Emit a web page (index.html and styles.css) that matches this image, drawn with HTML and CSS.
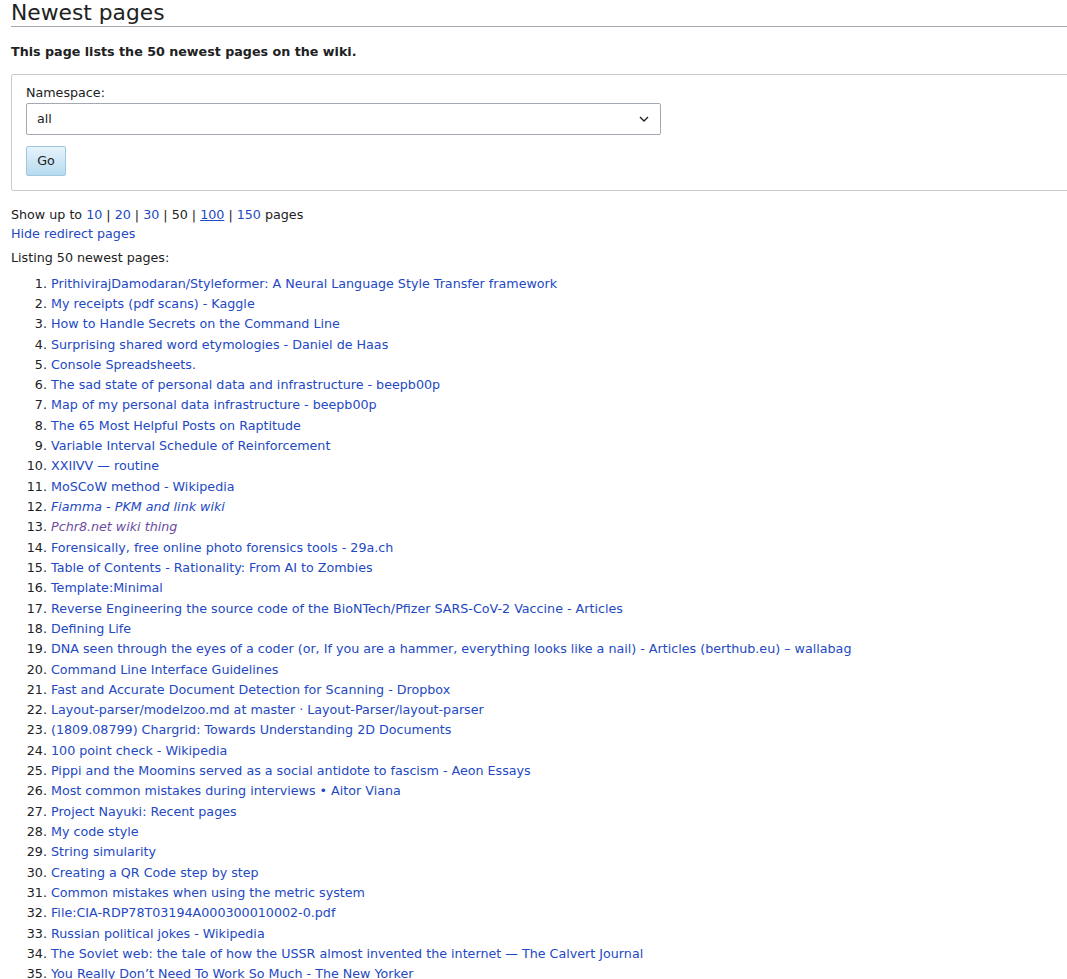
FILE: index.html
```html
<!DOCTYPE html>
<html>
  <head>
    <meta name="viewport" content="width=device-width, initial-scale=1" />
    <title>Newest pages</title>
    <link rel="stylesheet" href="styles.css">
  </head>
  <body>
    <div class="content">
      <h1 class="page-title">Newest pages</h1>

      <p class="intro"><b>This page lists the 50 newest pages on the wiki.</b></p>

      <form class="options" action="#">
        <label for="namespace">Namespace:</label>
        <div class="select-wrap">
          <select id="namespace" name="namespace">
            <option>all</option>
          </select>
          <svg class="chevron" width="10" height="6" viewBox="0 0 10 6">
            <path d="M1 1l4 4 4-4" fill="none" stroke="#202122" stroke-width="1.4" />
          </svg>
        </div>
        <button type="submit" class="go">Go</button>
      </form>

      <p class="limits">
        Show up to <a href="#">10</a> | <a href="#">20</a> | <a href="#">30</a> | 50 | <a href="#" class="hover">100</a> | <a href="#">150</a> pages<br />
        <a href="#">Hide redirect pages</a>
      </p>

      <p>Listing 50 newest pages:</p>

      <ol class="newpages">
        <li><a href="#">PrithivirajDamodaran/Styleformer: A Neural Language Style Transfer framework</a></li>
        <li><a href="#">My receipts (pdf scans) - Kaggle</a></li>
        <li><a href="#">How to Handle Secrets on the Command Line</a></li>
        <li><a href="#">Surprising shared word etymologies - Daniel de Haas</a></li>
        <li><a href="#">Console Spreadsheets.</a></li>
        <li><a href="#">The sad state of personal data and infrastructure - beepb00p</a></li>
        <li><a href="#">Map of my personal data infrastructure - beepb00p</a></li>
        <li><a href="#">The 65 Most Helpful Posts on Raptitude</a></li>
        <li><a href="#">Variable Interval Schedule of Reinforcement</a></li>
        <li><a href="#">XXIIVV — routine</a></li>
        <li><a href="#">MoSCoW method - Wikipedia</a></li>
        <li class="redirect"><a href="#">Fiamma - PKM and link wiki</a></li>
        <li class="redirect"><a href="#" class="visited">Pchr8.net wiki thing</a></li>
        <li><a href="#">Forensically, free online photo forensics tools - 29a.ch</a></li>
        <li><a href="#">Table of Contents - Rationality: From AI to Zombies</a></li>
        <li><a href="#">Template:Minimal</a></li>
        <li><a href="#">Reverse Engineering the source code of the BioNTech/Pfizer SARS-CoV-2 Vaccine - Articles</a></li>
        <li><a href="#">Defining Life</a></li>
        <li><a href="#">DNA seen through the eyes of a coder (or, If you are a hammer, everything looks like a nail) - Articles (berthub.eu) – wallabag</a></li>
        <li><a href="#">Command Line Interface Guidelines</a></li>
        <li><a href="#">Fast and Accurate Document Detection for Scanning - Dropbox</a></li>
        <li><a href="#">Layout-parser/modelzoo.md at master · Layout-Parser/layout-parser</a></li>
        <li><a href="#">(1809.08799) Chargrid: Towards Understanding 2D Documents</a></li>
        <li><a href="#">100 point check - Wikipedia</a></li>
        <li><a href="#">Pippi and the Moomins served as a social antidote to fascism - Aeon Essays</a></li>
        <li><a href="#">Most common mistakes during interviews • Aitor Viana</a></li>
        <li><a href="#">Project Nayuki: Recent pages</a></li>
        <li><a href="#">My code style</a></li>
        <li><a href="#">String simularity</a></li>
        <li><a href="#">Creating a QR Code step by step</a></li>
        <li><a href="#">Common mistakes when using the metric system</a></li>
        <li><a href="#">File:CIA-RDP78T03194A000300010002-0.pdf</a></li>
        <li><a href="#">Russian political jokes - Wikipedia</a></li>
        <li><a href="#">The Soviet web: the tale of how the USSR almost invented the internet — The Calvert Journal</a></li>
        <li><a href="#">You Really Don’t Need To Work So Much - The New Yorker</a></li>
      </ol>
    </div>
  </body>
</html>
```

FILE: styles.css
```css
/* Основа страницы */
html {
  overflow-x: hidden;
  scrollbar-width: none;
}

body {
  margin: 0;
  font-family: "DejaVu Sans", sans-serif;
  font-size: 12.7px;
  line-height: 1.5em;
  color: #202122;
  background: #fff;
}

.content {
  margin: 0 -30px 0 11px;
}

a {
  color: #2349c2;
  text-decoration: none;
}

a.hover {
  text-decoration: underline;
}

a.visited {
  color: #6b4ba1;
}

p {
  margin: 0.4em 0 0.5em 0;
}

/* Заголовок */
.page-title {
  margin: 0;
  font-size: 21.8px;
  font-weight: normal;
  line-height: 26px;
  border-bottom: 1px solid #a2a9b1;
}

.intro {
  margin: 15px 0 0;
}

/* Форма выбора пространства имён */
.options {
  margin: 13px 0 0;
  padding: 9px 14px 14px;
  border: 1px solid #c8ccd1;
  border-radius: 2px;
}

.options label {
  display: block;
  line-height: 17px;
  margin-bottom: 2px;
}

.select-wrap {
  position: relative;
  width: 635px;
}

.select-wrap select {
  appearance: none;
  -webkit-appearance: none;
  display: block;
  width: 100%;
  height: 32px;
  padding: 0 28px 2px 10px;
  font-family: inherit;
  font-size: 12.7px;
  color: #202122;
  background: #fff;
  border: 1px solid #a2a9b1;
  border-radius: 2px;
}

.chevron {
  position: absolute;
  right: 12px;
  top: 13px;
}

.go {
  display: block;
  margin-top: 11px;
  width: 40px;
  height: 30px;
  padding: 0 0 2px;
  font-family: inherit;
  font-size: 12.7px;
  color: #202122;
  background: linear-gradient(#e6f3fb, #b7dbef);
  border: 1px solid #9fc7e0;
  border-radius: 2px;
}

.limits {
  margin: 14px 0 0;
}

/* Список страниц */
.newpages {
  margin: 0.3em 0 0 40px;
  padding: 0;
}

.newpages li {
  margin-bottom: 0.1em;
}

.redirect a {
  font-style: italic;
}
```
